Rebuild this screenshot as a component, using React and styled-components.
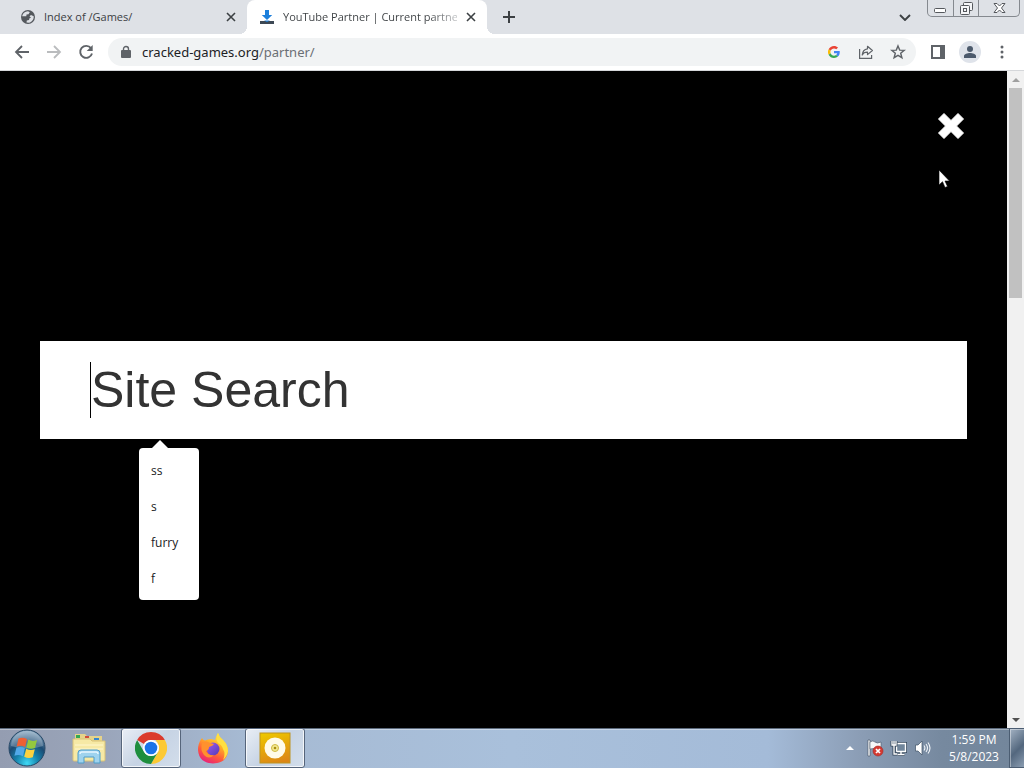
import React from "react";
import styled, { createGlobalStyle, css } from "styled-components";

const GlobalStyle = createGlobalStyle`
  *, *::before, *::after { box-sizing: border-box; }
  body {
    margin: 0;
    background: #000;
    font-family: "Open Sans", "Noto Sans", sans-serif;
    font-size: 12px;
    color: #3c4043;
  }
  button, input { font: inherit; color: inherit; }
  button { border: 0; padding: 0; background: none; }
  svg { display: block; }
`;

const Screen = styled.div`
  display: flex;
  flex-direction: column;
  min-height: 100vh;
`;

/* ---------- tab strip ---------- */
const TabStrip = styled.header`
  display: flex;
  align-items: stretch;
  height: 34px;
  padding-right: 4px;
  background: #dee1e6;
`;

const Tab = styled.div`
  position: relative;
  display: flex;
  align-items: center;
  gap: 8px;
  width: ${(p) => (p.$active ? 240 : 247)}px;
  padding: 0 10px 0 ${(p) => (p.$active ? 12 : 20)}px;
  ${(p) =>
    p.$active &&
    css`
      background: #fff;
      border-radius: 8px 8px 0 0;
      &::before,
      &::after {
        content: "";
        position: absolute;
        bottom: 0;
        width: 8px;
        height: 8px;
      }
      &::before {
        left: -8px;
        background: radial-gradient(circle at 0 0, transparent 8px, #fff 8px);
      }
      &::after {
        right: -8px;
        background: radial-gradient(circle at 100% 0, transparent 8px, #fff 8px);
      }
    `}
`;

const TabTitle = styled.span`
  flex: 1;
  min-width: 0;
  white-space: nowrap;
  font-size: 11px;
  line-height: 16px;
  ${(p) =>
    p.$fade &&
    css`
      color: transparent;
      background: linear-gradient(to right, #3c4043 145px, #c4c6c8 174px);
      background-clip: text;
    `}
`;

const IconButton = styled.button`
  display: grid;
  place-items: center;
  flex: none;
  width: ${(p) => p.$w || 32}px;
  height: ${(p) => p.$h || 28}px;
  color: ${(p) => p.$color || "#5f6368"};
`;

const StripSpacer = styled.div`
  flex: 1;
`;

const WindowControls = styled.div`
  display: flex;
  height: 17px;
  border: 1px solid #85898f;
  border-top: 0;
  border-radius: 0 0 5px 5px;
`;

const WindowButton = styled.button`
  display: grid;
  place-items: center;
  width: ${(p) => (p.$wide ? 41 : 25)}px;
  & + & {
    border-left: 1px solid #85898f;
  }
`;

/* ---------- toolbar ---------- */
const Toolbar = styled.nav`
  display: flex;
  align-items: center;
  height: 37px;
  padding: 0 6px;
  background: #fff;
  border-bottom: 1px solid #d5d7da;
`;

const AddressBar = styled.div`
  flex: 1;
  display: flex;
  align-items: center;
  height: 28px;
  margin: 0 6px;
  padding: 0 2px 0 13px;
  border-radius: 14px;
  background: #f1f3f4;
`;

const Url = styled.a`
  flex: 1;
  margin-left: 11px;
  font-family: "Noto Sans", sans-serif;
  font-size: 13px;
  line-height: 20px;
  color: #6b6f74;
  text-decoration: none;
`;

const Host = styled.span`
  color: #202124;
`;

const Avatar = styled.span`
  display: grid;
  place-items: center;
  width: 22px;
  height: 22px;
  border-radius: 50%;
  background: #dfe3ea;
`;

/* ---------- page ---------- */
const Viewport = styled.div`
  flex: 1;
  display: flex;
`;

const Overlay = styled.main`
  flex: 1;
  min-width: 0;
  padding: 40px;
  background: #000;
`;

const OverlayHeader = styled.div`
  display: flex;
  justify-content: flex-end;
  margin-bottom: 200px;
`;

const CloseOverlay = styled.button`
  display: grid;
  place-items: center;
  width: 32px;
  height: 30px;
  color: #fff;
`;

const SearchForm = styled.form`
  position: relative;
  display: flex;
  align-items: center;
  height: 98px;
  padding: 0 50px;
  background: #fff;
`;

const Caret = styled.span`
  width: 1px;
  height: 56px;
  background: #000;
`;

const SearchInput = styled.input`
  flex: 1;
  min-width: 0;
  height: 60px;
  padding: 0;
  border: 0;
  outline: 0;
  background: transparent;
  font-family: "Liberation Sans", Arial, sans-serif;
  font-size: 50px;
  color: #333;
  &::placeholder {
    color: #333;
    opacity: 1;
  }
`;

const Suggestions = styled.ul`
  position: absolute;
  top: 107px;
  left: 99px;
  width: 60px;
  margin: 0;
  padding: 4px 0;
  list-style: none;
  background: #fff;
  border-radius: 4px;
  &::before {
    content: "";
    position: absolute;
    top: -8px;
    left: 13px;
    border: 8px solid transparent;
    border-top: 0;
    border-bottom-color: #fff;
  }
`;

const Suggestion = styled.button`
  display: block;
  width: 100%;
  height: 36px;
  padding: 0 12px;
  text-align: left;
  color: #202124;
`;

const Pointer = styled.svg`
  position: absolute;
  top: 169px;
  left: calc(100% - 86px);
`;

const ScrollBar = styled.div`
  display: flex;
  flex-direction: column;
  width: 17px;
  background: #f1f1f1;
`;

const ScrollTrack = styled.div`
  flex: 1;
  padding: 0 2px;
`;

const ScrollThumb = styled.div`
  height: 210px;
  background: #c1c1c1;
`;

/* ---------- taskbar ---------- */
const Taskbar = styled.footer`
  display: flex;
  align-items: stretch;
  height: 40px;
  background: linear-gradient(to right, #949db1 0, #9aa5ba 10%, #a6bad3 24%, #a9c0db 50%, #a4bbd8 75%, #8b9db5 84%, #76899f 92%, #73869b 100%);
  box-shadow: inset 0 1px 0 #5c6a7c, inset 0 2px 0 rgba(255, 255, 255, 0.35);
`;

const StartButton = styled.button`
  display: grid;
  place-items: center;
  width: 54px;
`;

const TaskList = styled.div`
  display: flex;
  gap: 2px;
  flex: 1;
  padding-left: 5px;
`;

const TaskButton = styled.button`
  display: grid;
  place-items: center;
  width: 60px;
  border: 1px solid transparent;
  border-radius: 3px;
  ${(p) =>
    p.$open &&
    css`
      border-color: #56657b;
      background: linear-gradient(135deg, #e9eef5, #c6d3e4 50%, #d3deeb);
      box-shadow: inset 0 0 0 1px rgba(255, 255, 255, 0.75);
    `}
`;

const Tray = styled.div`
  display: flex;
  align-items: center;
`;

const Clock = styled.time`
  width: 70px;
  margin-left: 4px;
  text-align: center;
  line-height: 17px;
  color: #fff;
`;

const ShowDesktop = styled.button`
  align-self: stretch;
  width: 15px;
  border: 1px solid #4b5d72;
  border-right: 0;
  background: linear-gradient(135deg, #a3b2c3, #53677e 55%, #8b9db1);
  box-shadow: inset 1px 1px 0 rgba(255, 255, 255, 0.4);
`;

/* ---------- drawings ---------- */
const Globe = () => (
  <svg width="16" height="16" viewBox="0 0 16 16">
    <circle cx="8" cy="8" r="7" fill="#54585d" />
    <path d="M2.200 7.500C2.500 4.500 5 2.300 8 2.200L9.800 3.200 8.500 5.200 6.500 5.500 6.300 7.200H2.200Z" fill="#dee1e6" />
    <path d="M9.500 7.200 11 6l2.700 1.200c.3 3-1.700 5.800-4.700 6.500L6.500 13.500 6.800 11.500 9 11 9.500 9.200 11 8.800Z" fill="#dee1e6" />
  </svg>
);

const DownloadMark = () => (
  <svg width="16" height="16" viewBox="0 0 16 16">
    <path d="M6 1h4v5h3.200L8 11 2.800 6H6Z" fill="#1c7fdb" />
    <path d="M1 12h14v3H1Z" fill="#3d4854" />
    <path d="M5 11.500h6L8 13Z" fill="#1c7fdb" />
  </svg>
);

const Cross = () => (
  <svg width="10" height="10" viewBox="0 0 10 10" stroke="#3c4043" strokeWidth="1.600">
    <path d="m1 1 8 8M9 1 1 9" />
  </svg>
);

const Arrow = ({ flip }) => (
  <svg width="16" height="16" viewBox="0 0 16 16" fill="none" stroke="currentColor" strokeWidth="1.800">
    <path d={flip ? "M1 8h13M8 2l6 6-6 6" : "M15 8H2M8 2 2 8l6 6"} />
  </svg>
);

const Reload = () => (
  <svg width="16" height="16" viewBox="0 0 16 16">
    <path d="M13 4.200A6 6 0 1 0 14 9.500" fill="none" stroke="currentColor" strokeWidth="1.900" />
    <path d="M14.700 1v6H8.700Z" fill="currentColor" />
  </svg>
);

const Lock = () => (
  <svg width="10" height="14" viewBox="0 0 10 14">
    <path d="M2.500 6V4a2.500 2.500 0 0 1 5 0v2" fill="none" stroke="#5f6368" strokeWidth="1.400" />
    <rect y="5" width="10" height="8" rx="1" fill="#5f6368" />
  </svg>
);

const GoogleG = () => (
  <svg width="12" height="12" viewBox="0 0 48 48">
    <path fill="#EA4335" d="M24 9.500c3.500 0 6.700 1.200 9.200 3.600l6.900-6.900C35.900 2.400 30.500 0 24 0 14.600 0 6.500 5.400 2.600 13.200l8 6.200C12.400 13.700 17.700 9.500 24 9.500z" />
    <path fill="#4285F4" d="M47 24.500c0-1.600-.2-3.100-.4-4.500H24v9h12.900c-.6 3-2.300 5.500-4.800 7.200l7.700 6C44.400 38 47 31.800 47 24.500z" />
    <path fill="#FBBC05" d="M10.500 28.600A14.500 14.500 0 0 1 10.500 19.400l-8-6.200a24 24 0 0 0 0 21.600l8-6.200z" />
    <path fill="#34A853" d="M24 48c6.500 0 11.900-2.100 15.900-5.800l-7.700-6c-2.200 1.500-4.900 2.300-8.200 2.300-6.300 0-11.600-4.200-13.500-9.900l-8 6.200C6.500 42.600 14.600 48 24 48z" />
  </svg>
);

const Share = () => (
  <svg width="16" height="16" viewBox="0 0 16 16" fill="none" stroke="currentColor" strokeWidth="1.200">
    <path d="M1.600 5v9.400h12V11" />
    <path d="M9.500 2.300 14.400 6.500 9.500 10.600V8.200C7 8.100 5.300 9 4.200 11c.3-3.600 2.200-5.700 5.300-6.200Z" strokeLinejoin="round" />
  </svg>
);

const Star = () => (
  <svg width="16" height="16" viewBox="0 0 16 16" fill="none" stroke="currentColor" strokeWidth="1.400">
    <path d="m8 1.900 1.700 4.200 4.500.3-3.500 2.900 1.200 4.400L8 11.300l-3.900 2.400 1.200-4.400L1.800 6.400l4.500-.3Z" />
  </svg>
);

const SidePanel = () => (
  <svg width="14" height="14" viewBox="0 0 14 14">
    <path d="M0 0h14v14H0Zm2 2v10h7V2Z" fill="currentColor" fillRule="evenodd" />
  </svg>
);

const Person = () => (
  <svg width="14" height="14" viewBox="0 0 14 14" fill="#4c5a6c">
    <circle cx="7" cy="4" r="3" />
    <path d="M1 13v-2c0-2 3.500-3 6-3s6 1 6 3v2Z" />
  </svg>
);

const Dots = () => (
  <svg width="4" height="14" viewBox="0 0 4 14" fill="currentColor">
    <circle cx="2" cy="2" r="1.500" />
    <circle cx="2" cy="7" r="1.500" />
    <circle cx="2" cy="12" r="1.500" />
  </svg>
);

const StartOrb = () => (
  <svg width="38" height="38" viewBox="0 0 38 38">
    <defs>
      <radialGradient id="orb" cx="50%" cy="92%" r="90%">
        <stop offset="0" stopColor="#3fd9f5" />
        <stop offset=".35" stopColor="#1683ac" />
        <stop offset=".65" stopColor="#1c4a72" />
        <stop offset="1" stopColor="#8aa9c2" />
      </radialGradient>
    </defs>
    <circle cx="19" cy="19" r="18" fill="url(#orb)" stroke="#264765" />
    <path d="M3 17A16 15 0 0 1 35 17Q19 22 3 17Z" fill="#fff" opacity=".25" />
    <path d="M10.500 9.500q4-2 8.500.6l-1.900 8q-4-2.300-8.400-.5Z" fill="#ee6034" />
    <path d="M20.300 10.600q4.200 2.400 8.700.5l-2 8q-4.300 1.700-8.600-.5Z" fill="#94c83e" />
    <path d="M8.400 18.800q4.300-1.800 8.500.5l-2 8q-4.200-2.300-8.500-.5Z" fill="#52a9e8" />
    <path d="M18.200 19.800q4.200 2.200 8.600.4l-2 8.100q-4.300 1.800-8.600-.5Z" fill="#fdd23f" />
  </svg>
);

const Explorer = () => (
  <svg width="34" height="32" viewBox="0 0 34 32">
    <path d="M3 2h10l2 2h15v24H3Z" fill="#e6d38a" />
    <path d="M4 3h4v3H4Z" fill="#35a853" />
    <path d="M13 4h4v2h-4Z" fill="#d14d3d" />
    <path d="M22 6h5v2h-5Z" fill="#3587cf" />
    <path d="M1 7h17l2 2h13v19q0 1-1 1H2q-1 0-1-1Z" fill="#f6e9a5" stroke="#d9c277" />
    <path d="M3 13h28M3 17h28" stroke="#fff7cf" />
    <path d="M6 31V21q0-3 3-3h16q3 0 3 3v10h-6v-6H12v6Z" fill="#9fd3ee" stroke="#4d9dcb" />
    <path d="M8 22q0-2 2-2h14q2 0 2 2" fill="none" stroke="#e6f6ff" strokeWidth="1.500" />
  </svg>
);

const Chrome = () => (
  <svg width="32" height="32" viewBox="0 0 48 48">
    <path fill="#DB3B2D" d="M24 0a24 24 0 0 1 20.800 12H24A12 12 0 0 0 13.600 18L3.200 12A24 24 0 0 1 24 0Z" />
    <path fill="#FCC934" d="M44.800 12A24 24 0 0 1 24 48L34.400 30A12 12 0 0 0 34.400 18L31 12Z" />
    <path fill="#1E8E3E" d="M24 48A24 24 0 0 1 3.200 12L13.600 30A12 12 0 0 0 34.400 30Z" />
    <circle cx="24" cy="24" r="12" fill="#fff" />
    <circle cx="24" cy="24" r="9.500" fill="#1a73e8" />
  </svg>
);

const Firefox = () => (
  <svg width="32" height="32" viewBox="0 0 32 32">
    <defs>
      <linearGradient id="fox" x1=".8" y1="0" x2=".3" y2="1">
        <stop offset="0" stopColor="#fff04b" />
        <stop offset=".4" stopColor="#ffac28" />
        <stop offset=".7" stopColor="#ff5b3a" />
        <stop offset="1" stopColor="#e8207c" />
      </linearGradient>
      <linearGradient id="foxCore" x1="0" y1="0" x2="1" y2="1">
        <stop offset="0" stopColor="#a15af0" />
        <stop offset="1" stopColor="#533bb5" />
      </linearGradient>
    </defs>
    <path d="M5 6q1 2 3 2.500 2.500-1.500 6-1.500l4 1Q19 4 21 1q1 4 5 7 5 5 5 11-1 12-15 12.500Q2 31 1 18q0-7 4-12Z" fill="url(#fox)" />
    <circle cx="16" cy="17" r="6.500" fill="url(#foxCore)" />
    <path d="M5 11q4-3 8 0l4 1q-1 2-5 3 0 3-3 4 2 5 8 4-5 5-10 0-4-5-2-12Z" fill="#ff912e" />
    <path d="M21 1q1 4 5 7 5 5 5 11-1 6-5 9 3-6 0-11-1-4-5-6Q18 7 21 1Z" fill="#ffdf42" />
  </svg>
);

const DiscApp = () => (
  <svg width="32" height="32" viewBox="0 0 32 32">
    <defs>
      <linearGradient id="disc" x1=".3" y1="0" x2=".6" y2="1">
        <stop offset="0" stopColor="#edc500" />
        <stop offset="1" stopColor="#dc8616" />
      </linearGradient>
    </defs>
    <rect x="1" y="1" width="30" height="30" fill="url(#disc)" stroke="#be9420" />
    <circle cx="16" cy="16" r="10.500" fill="#fffbe9" />
    <circle cx="16" cy="16" r="3.500" fill="#f4e990" stroke="#cfb944" />
    <circle cx="16" cy="16" r="1.300" fill="#a98d13" />
  </svg>
);

const Flag = () => (
  <svg width="18" height="18" viewBox="0 0 18 18">
    <path d="M2 1h2v16H2Z" fill="#fff" stroke="#414f60" strokeWidth=".6" />
    <path d="M4 3q3-2 5 0t6 0v7q-3 1-5 0t-6 0Z" fill="#f5f8fa" stroke="#4a5868" strokeWidth=".6" />
    <circle cx="12" cy="12" r="5" fill="#d53a32" stroke="#a72722" strokeWidth=".6" />
    <path d="m10 10 4 4m0-4-4 4" stroke="#fff" strokeWidth="1.700" />
  </svg>
);

const Network = () => (
  <svg width="18" height="18" viewBox="0 0 18 18">
    <path d="M6.500 4.500h9v8h-9ZM11 13v2m-3.500.500h7" fill="#5e7288" stroke="#34475b" strokeWidth="3" />
    <path d="M6.500 4.500h9v8h-9ZM11 13v2m-3.500.500h7" fill="#71869b" stroke="#fff" strokeWidth="1.400" />
    <path d="M2 2v4h4V2M4 6v9h3" fill="#5e7288" stroke="#34475b" strokeWidth="3" />
    <path d="M2 2v4h4V2M4 6v9h3M4 2v4" fill="none" stroke="#fff" strokeWidth="1.300" />
  </svg>
);

const Volume = () => (
  <svg width="18" height="18" viewBox="0 0 18 18">
    <path d="M1.500 6H4l4-4v14l-4-4H1.500Z" fill="#fff" stroke="#3e5064" strokeWidth=".7" />
    <path d="M10 6.500q1.800 2.500 0 5M12 5q3 4 0 8M14 3.500q4 5.500 0 11" fill="none" stroke="#f1f5f9" strokeWidth="1.100" />
  </svg>
);

const Triangle = ({ down, color = "#a0a0a0" }) => (
  <svg width="8" height="4" viewBox="0 0 8 4">
    <path d={down ? "M0 0h8L4 4Z" : "M0 4h8L4 0Z"} fill={color} />
  </svg>
);

const history = ["ss", "s", "furry", "f"];

export default function App() {
  return (
    <>
      <GlobalStyle />
      <Screen>
        <TabStrip>
          <Tab>
            <Globe />
            <TabTitle>Index of /Games/</TabTitle>
            <IconButton $w={12} aria-label="Close tab"><Cross /></IconButton>
          </Tab>
          <Tab $active>
            <DownloadMark />
            <TabTitle $fade>YouTube Partner | Current partne</TabTitle>
            <IconButton $w={12} aria-label="Close tab"><Cross /></IconButton>
          </Tab>
          <IconButton $w={44} $h={34} $color="#3c4043" aria-label="New tab">
            <svg width="12" height="12" viewBox="0 0 12 12" stroke="currentColor" strokeWidth="2">
              <path d="M6 0v12M0 6h12" />
            </svg>
          </IconButton>
          <StripSpacer />
          <IconButton $w={44} $h={34} $color="#3c4043" aria-label="Search tabs">
            <svg width="12" height="7" viewBox="0 0 12 7" fill="none" stroke="currentColor" strokeWidth="1.900">
              <path d="m1 1 5 5 5-5" />
            </svg>
          </IconButton>
          <WindowControls>
            <WindowButton aria-label="Minimize">
              <svg width="13" height="13" viewBox="0 0 13 13">
                <rect x=".5" y="6.500" width="11" height="4" rx="1" fill="#fff" stroke="#55585d" />
              </svg>
            </WindowButton>
            <WindowButton aria-label="Restore">
              <svg width="13" height="13" viewBox="0 0 13 13" fill="#f4f5f7" stroke="#55585d">
                <rect x="3.500" y=".5" width="9" height="8" rx="1" />
                <rect x=".5" y="3.500" width="9" height="9" rx="1" />
                <rect x="3.500" y="6.500" width="3" height="3" />
              </svg>
            </WindowButton>
            <WindowButton $wide aria-label="Close">
              <svg width="13" height="12" viewBox="0 0 13 12">
                <path d="M1 1.500h3l2.500 2.500L9 1.500h3L8.500 6l3.500 4.500H9L6.500 8 4 10.500H1L4.500 6Z" fill="#fff" stroke="#55585d" />
              </svg>
            </WindowButton>
          </WindowControls>
        </TabStrip>

        <Toolbar>
          <IconButton aria-label="Back"><Arrow /></IconButton>
          <IconButton $color="#babcbe" aria-label="Forward"><Arrow flip /></IconButton>
          <IconButton aria-label="Reload"><Reload /></IconButton>
          <AddressBar>
            <Lock />
            <Url href="#"><Host>cracked-games.org</Host>/partner/</Url>
            <IconButton aria-label="Search with Google"><GoogleG /></IconButton>
            <IconButton aria-label="Share"><Share /></IconButton>
            <IconButton aria-label="Bookmark"><Star /></IconButton>
          </AddressBar>
          <IconButton aria-label="Side panel"><SidePanel /></IconButton>
          <IconButton aria-label="Profile"><Avatar><Person /></Avatar></IconButton>
          <IconButton aria-label="Menu"><Dots /></IconButton>
        </Toolbar>

        <Viewport>
          <Overlay>
            <OverlayHeader>
              <CloseOverlay aria-label="Close search">
                <svg width="26" height="26" viewBox="0 0 26 26">
                  <path d="M6 .5 13 7.500 20 .5 25.500 6 18.500 13 25.500 20 20 25.500 13 18.500 6 25.500 .5 20 7.500 13 .5 6Z" fill="currentColor" stroke="currentColor" strokeLinejoin="round" />
                </svg>
              </CloseOverlay>
            </OverlayHeader>
            <SearchForm onSubmit={(e) => e.preventDefault()}>
              <Caret />
              <SearchInput type="text" placeholder="Site Search" aria-label="Site Search" />
              <Suggestions>
                {history.map((item) => (
                  <li key={item}><Suggestion type="button">{item}</Suggestion></li>
                ))}
              </Suggestions>
            </SearchForm>
          </Overlay>
          <ScrollBar>
            <IconButton $w={17} $h={17} aria-label="Scroll up"><Triangle /></IconButton>
            <ScrollTrack><ScrollThumb /></ScrollTrack>
            <IconButton $w={17} $h={17} aria-label="Scroll down"><Triangle down color="#505050" /></IconButton>
          </ScrollBar>
        </Viewport>
        <Pointer width="12" height="20" viewBox="0 0 12 20">
          <path d="M1 1v15l3.500-3.300L7 18.500l2.500-1.100L7 12h4.500Z" fill="#fff" stroke="#000" strokeWidth=".6" />
        </Pointer>

        <Taskbar>
          <StartButton aria-label="Start"><StartOrb /></StartButton>
          <TaskList>
            <TaskButton aria-label="File Explorer"><Explorer /></TaskButton>
            <TaskButton $open aria-label="Chrome"><Chrome /></TaskButton>
            <TaskButton aria-label="Firefox"><Firefox /></TaskButton>
            <TaskButton $open aria-label="Disc app"><DiscApp /></TaskButton>
          </TaskList>
          <Tray>
            <IconButton $w={26} aria-label="Show hidden icons"><Triangle color="#fff" /></IconButton>
            <IconButton $w={24} aria-label="Action center"><Flag /></IconButton>
            <IconButton $w={24} aria-label="Network"><Network /></IconButton>
            <IconButton $w={24} aria-label="Volume"><Volume /></IconButton>
            <Clock>1:59 PM<br />5/8/2023</Clock>
            <ShowDesktop aria-label="Show desktop" />
          </Tray>
        </Taskbar>
      </Screen>
    </>
  );
}
